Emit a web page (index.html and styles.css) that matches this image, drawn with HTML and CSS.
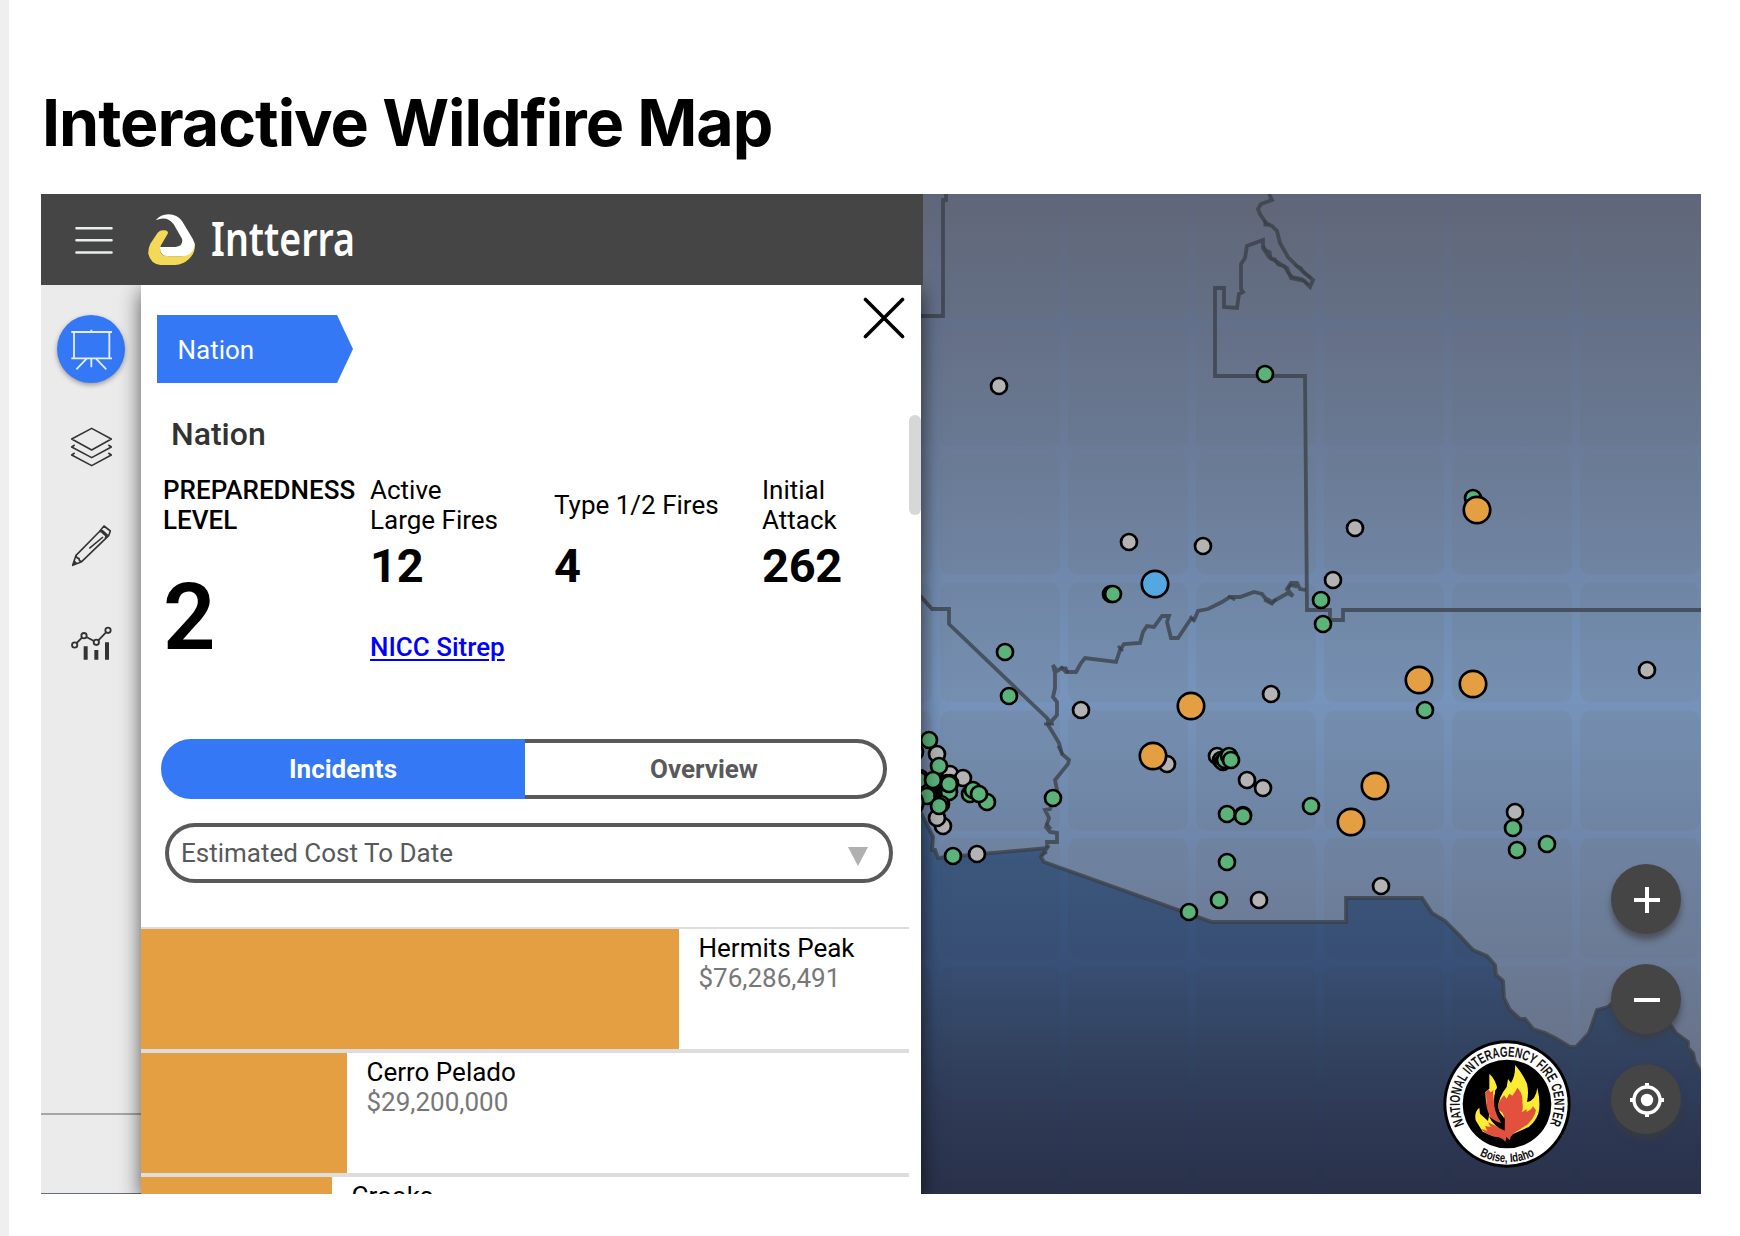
FILE: index.html
```html
<!DOCTYPE html>
<html lang="en">
<head>
<meta charset="utf-8">
<title>Interactive Wildfire Map</title>
<link rel="stylesheet" href="styles.css">
</head>
<body>
<main class="page">
<h1 class="page-title">Interactive Wildfire Map</h1>
<section class="widget">
<svg class="map" viewBox="41 194 1660 1000" aria-label="Incident map">
<defs>
<linearGradient id="land" gradientUnits="userSpaceOnUse" x1="0" y1="194" x2="0" y2="1194">
<stop offset="0" stop-color="#5f667a"/><stop offset=".13" stop-color="#63708b"/><stop offset=".26" stop-color="#6a7c9a"/><stop offset=".39" stop-color="#7089ad"/><stop offset=".5" stop-color="#7694bc"/><stop offset=".64" stop-color="#6f87ab"/><stop offset=".77" stop-color="#6b7c9a"/><stop offset=".87" stop-color="#67738f"/><stop offset="1" stop-color="#626b84"/>
</linearGradient>
<linearGradient id="sea" gradientUnits="userSpaceOnUse" x1="0" y1="194" x2="0" y2="1194">
<stop offset=".62" stop-color="#3f5f8e"/><stop offset=".67" stop-color="#3b5982"/><stop offset=".77" stop-color="#385077"/><stop offset=".84" stop-color="#334666"/><stop offset=".92" stop-color="#2d3956"/><stop offset="1" stop-color="#29314b"/>
</linearGradient>
<pattern id="tiles" patternUnits="userSpaceOnUse" x="940" y="326.5" width="128" height="128">
<rect width="120" height="120" rx="10" fill="#6e6a64" fill-opacity=".12"/>
</pattern>
<pattern id="tilesFaint" patternUnits="userSpaceOnUse" x="940" y="326.5" width="128" height="128">
<rect width="120" height="120" rx="10" fill="#3c3c40" fill-opacity=".09"/>
</pattern>
<path id="ocean" d="M921 813L933 837 932 850 935 850 938 858 1047 848 1041 857 1044 862 1212 922H1346V898H1422L1432 913 1445 921 1460 936 1473 950 1487 956 1495 965 1496 975 1503 981 1504 998 1510 1010 1520 1019 1525 1019 1533 1029 1545 1033 1555 1038 1570 1047H1576L1589 1033 1597 1010 1608 1007 1620 996 1650 1000 1672 1027 1676 1033 1688 1042 1688 1048 1693 1053 1695 1062 1701 1072 1710 1080V1210H900V813Z"/>
</defs>
<rect x="41" y="194" width="1660" height="1000" fill="url(#land)"/>
<rect x="41" y="194" width="1660" height="1000" fill="url(#tiles)"/>
<use href="#ocean" fill="url(#sea)"/>
<use href="#ocean" fill="url(#tilesFaint)"/>
<g class="borders">
<path d="M946 194V200H943V316H915"/>
<path d="M1269 194L1272 200 1261 204 1258 209 1260 214 1266 223 1272 226 1277 231 1280 243 1288 257 1298 267 1313 280 1310 287 1304 281 1291 278 1287 268 1277 262 1269 257 1263 248V240L1247 246 1245 258 1241 264V289L1243 292 1239 294 1237 308 1224 307V288H1215V376H1305L1307 610H1330V620H1343V610H1701"/>
<path class="rough" d="M1263 246L1266 250 1270 252 1271 259 1275 259 1278 265 1284 266 1288 273 1293 277 1302 279 1309 285M1295 265L1301 268 1304 273 1311 278M1265 220V225H1270"/>
<path d="M1306 590L1300 589 1297 583 1291 583 1287 589 1293 596 1288 593 1272 602 1265 598 1262 594 1254 592 1240 597 1230 597 1222 602 1208 609 1198 611 1195 618 1190 620 1178 638H1171L1167 622 1169 616H1162L1154 627 1147 626 1143 632 1140 643 1124 644 1120 650 1116 662 1085 658 1081 663 1076 672H1066L1062 668 1057 671 1053 665 1055 673V688L1053 697 1057 702V715L1050 723 1048 719 1048 725 1053 733 1059 743 1062 754 1069 760 1068 764 1055 780 1057 790 1053 800 1050 809 1045 810 1049 818 1046 827 1050 832 1057 833V842H1047V848"/>
<path class="rough" d="M1060 668L1066 668 1068 673M1118 646L1123 651M1190 616L1195 622M1228 596L1235 600M1264 600L1272 604 1276 599M1288 589L1291 585 1297 587M1044 724L1054 724M1058 746L1063 755M1040 856L1047 852M1046 823L1051 829"/>
<path d="M915 590L932 609H949V624L1048 719"/>
<use href="#ocean"/>
</g>
<g class="dot contained">
<circle cx="1265" cy="374" r="8"/><circle cx="1111" cy="594" r="8"/><circle cx="1113" cy="594" r="8"/><circle cx="1321" cy="600" r="8"/><circle cx="1323" cy="624" r="8"/><circle cx="1473" cy="498" r="8"/><circle cx="1005" cy="652" r="8"/><circle cx="1009" cy="696" r="8"/><circle cx="1425" cy="710" r="8"/><circle cx="1053" cy="798" r="8"/><circle cx="1311" cy="806" r="8"/><circle cx="1227" cy="814" r="8"/><circle cx="1243" cy="815" r="8"/><circle cx="1243" cy="816" r="8"/><circle cx="1227" cy="862" r="8"/><circle cx="1219" cy="900" r="8"/><circle cx="1189" cy="912" r="8"/><circle cx="1517" cy="850" r="8"/><circle cx="1547" cy="844" r="8"/><circle cx="953" cy="856" r="8"/>
</g>
<g class="dot reported">
<circle cx="999" cy="386" r="8"/><circle cx="1129" cy="542" r="8"/><circle cx="1203" cy="546" r="8"/><circle cx="1355" cy="528" r="8"/><circle cx="1333" cy="580" r="8"/><circle cx="1081" cy="710" r="8"/><circle cx="1271" cy="694" r="8"/><circle cx="1647" cy="670" r="8"/><circle cx="1247" cy="780" r="8"/><circle cx="1263" cy="788" r="8"/><circle cx="1167" cy="764" r="8"/><circle cx="1515" cy="812" r="8"/><circle cx="1381" cy="886" r="8"/><circle cx="1259" cy="900" r="8"/><circle cx="977" cy="854" r="8"/><circle cx="1217" cy="756" r="8"/><circle cx="943" cy="826" r="8"/><circle cx="937" cy="818" r="8"/><circle cx="937" cy="754" r="8"/><circle cx="950" cy="774" r="8"/><circle cx="963" cy="778" r="8"/>
</g>
<g class="dot contained">
<circle cx="1513" cy="828" r="8"/><circle cx="1221" cy="760" r="8"/><circle cx="1223" cy="762" r="8"/><circle cx="1225" cy="760" r="8"/><circle cx="1229" cy="756" r="8"/><circle cx="1231" cy="760" r="8"/>
<circle cx="915" cy="752" r="8"/><circle cx="929" cy="740" r="8"/><circle cx="939" cy="766" r="8"/><circle cx="920" cy="778" r="8"/><circle cx="919" cy="780" r="8"/><circle cx="950" cy="783" r="8"/><circle cx="936" cy="788" r="8"/><circle cx="939" cy="794" r="8"/><circle cx="943" cy="790" r="8"/><circle cx="937" cy="799" r="8"/><circle cx="949" cy="792" r="8"/><circle cx="947" cy="783" r="8"/><circle cx="933" cy="780" r="8"/><circle cx="949" cy="784" r="8"/><circle cx="927" cy="796" r="8"/><circle cx="941" cy="804" r="8"/><circle cx="939" cy="806" r="8"/><circle cx="987" cy="802" r="8"/><circle cx="970" cy="794" r="8"/><circle cx="973" cy="790" r="8"/><circle cx="979" cy="794" r="8"/>
</g>
<path d="M935 789L941 784 942 794 938 799 933 797Z"/>
<g class="dot large"><circle cx="1477" cy="510" r="13.2"/><circle cx="1419" cy="680" r="13.2"/><circle cx="1473" cy="684" r="13.2"/><circle cx="1191" cy="706" r="13.2"/><circle cx="1153" cy="756" r="13.2"/><circle cx="1375" cy="786" r="13.2"/><circle cx="1351" cy="822" r="13.2"/></g>
<g class="dot prescribed"><circle cx="1155" cy="584" r="13.2"/><circle cx="910" cy="803" r="13.2"/></g>
</svg>

<div class="console">
<header class="topbar">
<svg class="menu" viewBox="0 0 38 28"><path d="M1.500 2.300h35M1.500 14.300h35M1.500 26.500h35"/></svg>
<svg class="brand" viewBox="440 455 150 165">
<path fill="#f4d857" d="M488 510Q503 508 503 519L482 555Q474 575 488 585 495 588 505 588L545 588Q570 583 583 545 588 575 565 597 548 613 525 614H480Q450 610 444 580 443 565 450 550L472 517Q479 510 488 510Z"/>
<path fill="#fff" d="M466 480Q480 462 505 462 530 462 545 482L577 535Q588 555 577 572 565 588 545 588H500Q478 586 479 560H525Q550 557 545 535L520 492Q500 465 466 480Z"/>
</svg>
<svg class="wordmark" viewBox="0 0 150 73"><text class="brand-name" x="2" y="54" textLength="144" lengthAdjust="spacingAndGlyphs">Intterra</text></svg>
</header>
<div class="body">
<nav class="rail">
<div class="rail-items">
<svg class="rail-icon active" viewBox="51 75 204 204"><path d="M94 126H216M94 205H216M102 126V205M208 126V205M154 119V126M140 206L109 238M154 206V232M168 206L199 238"/></svg>
<svg class="rail-icon" viewBox="51 369 204 204"><path d="M155 415L214 447 155 480 95 447ZM104 465L95 471 155 503 214 471 205 465M104 489L95 495 155 527 214 495 205 489"/></svg>
<svg class="rail-icon" viewBox="51 663 204 204"><path d="M192 708L211 723 206 737 125 815 98 826 108 796 177 726ZM177 726L183 724 198 738 196 746M183 718L203 736M108 796Q110 806 117 805 116 813 125 815M189 741L148 775"/><path class="solid" d="M98 826L103 810 112 820Z"/></svg>
<svg class="rail-icon" viewBox="51 957 204 204"><g class="trend"><circle cx="104" cy="1065" r="8"/><circle cx="132" cy="1037" r="8"/><circle cx="169" cy="1057" r="8"/><circle cx="204" cy="1021" r="8"/><path d="M110 1059L126 1043M139 1041L162 1053M175 1051L198 1027"/></g><path class="solid" d="M131 1069h12v40h-12zM163 1080h12v29h-12zM195 1057h12v52h-12z"/></svg>
</div>
<div class="rail-foot"></div>
</nav>
<div class="panel">
<div class="panel-head">
<div class="crumb">Nation</div>
<svg class="close" viewBox="0 0 42 42"><path d="M2.500 2.500L39.500 39.500M39.500 2.500L2.500 39.500"/></svg>
</div>
<div class="scroller">
<h2 class="region">Nation</h2>
<div class="stats">
<div class="stat"><div class="label strong">PREPAREDNESS LEVEL</div><div class="level">2</div></div>
<div class="stat"><div class="label">Active<br>Large Fires</div><div class="count">12</div><a class="sitrep" href="#">NICC Sitrep</a></div>
<div class="stat"><div class="label">Type 1/2 Fires</div><div class="count">4</div></div>
<div class="stat"><div class="label">Initial<br>Attack</div><div class="count">262</div></div>
</div>
<div class="tabs"><div class="tab selected">Incidents</div><div class="tab">Overview</div></div>
<div class="select"><span>Estimated Cost To Date</span><i class="arrow"></i></div>
<div class="rows">
<div class="row"><div class="bar" style="width:538px"></div><div class="info">Hermits Peak<span class="cost">$76,286,491</span></div></div>
<div class="row"><div class="bar" style="width:206px"></div><div class="info">Cerro Pelado<span class="cost">$29,200,000</span></div></div>
<div class="row"><div class="bar" style="width:191px"></div><div class="info">Crooks</div></div>
</div>
<div class="thumb"></div>
</div>
</div>
</div>
</div>

<div class="overlay">
<svg class="badge" viewBox="39 29 384 384">
<defs><path id="arcTop" d="M102.800 282A142 142 0 1 1 359.200 282"/><path id="arcLow" d="M149 375A175 175 0 0 0 318 373"/></defs>
<circle cx="231" cy="221" r="191" fill="#000"/><circle cx="231" cy="221" r="182" fill="#fff"/><circle cx="231" cy="221" r="133" fill="#000"/>
<text class="badge-text"><textPath href="#arcTop" textLength="572" lengthAdjust="spacingAndGlyphs">NATIONAL INTERAGENCY FIRE CENTER</textPath></text>
<text class="badge-text low"><textPath href="#arcLow" textLength="172" lengthAdjust="spacingAndGlyphs">Boise, Idaho</textPath></text>
<path fill="#fdec34" d="M178 130Q200 150 202 180L196 178 193 205Q196 235 212 265L222 285V262L203 238Q205 200 230 170L234 146 243 158Q257 135 255 104 275 125 291 160 297 185 291 215 318 210 322 172 333 220 325 250 315 275 296 290L228 320 190 318 158 304 137 270Q132 245 148 232L150 250 174 272 178 250 168 215 166 185 178 175Z"/>
<path fill="#e2503e" d="M168 185L175 177 182 186 190 180Q187 210 200 240 210 262 222 283 227 240 201 240 203 215 222 195L230 205 238 190 247 196Q258 182 262 172 280 190 277 215 280 232 276 246L290 236 290 245 303 237 309 228 318 240Q313 262 295 280 268 300 252 308L242 320 239 330 229 320 226 334Q215 320 190 318 162 308 152 295L172 301 165 287 182 290 174 276 204 290Q176 262 170 230Z"/>
<path d="M206 160Q188 195 193 228 198 256 214 278 192 272 176 256 190 288 224 301L225 262 219 268Q203 240 201 212 202 185 214 156Z"/>
</svg>
<div class="controls">
<svg class="ctl" viewBox="0 0 70 70"><path d="M23 36H49M36 23V49"/></svg>
<svg class="ctl" viewBox="0 0 70 70"><path d="M23 36H49"/></svg>
<svg class="ctl" viewBox="0 0 70 70"><circle class="ring" cx="36" cy="36" r="13"/><circle class="core" cx="36" cy="36" r="6.200"/><path d="M36 19V24M36 48V53M19 36H24M48 36H53"/></svg>
</div>
</div>
</section>
</main>
</body>
</html>
```
FILE: styles.css
```css
* { box-sizing: border-box; }
body { margin: 0; background: #fff; font-family: Roboto, "Liberation Sans", sans-serif; }
.page { height: 1236px; border-left: 9px solid #efefef; padding: 84px 39px 0 33px; overflow: hidden; }
.page-title { margin: 0 0 32px; font: 700 64.5px/78px Inter, sans-serif; letter-spacing: -1.05px; color: #000; white-space: nowrap; }
.widget { display: grid; width: 1660px; height: 1000px; margin-left: -1px; overflow: hidden; }
.widget > * { grid-area: 1 / 1; }
.map { display: block; width: 1660px; height: 1000px; }
.borders { fill: none; stroke: #3a3f47; stroke-opacity: .76; stroke-width: 3.8; }
.borders .rough { stroke-width: 3; }
.dot { stroke: #000; stroke-width: 2.7; }
.contained { fill: #5bb37a; }
.reported { fill: #b3b3b3; }
.large { fill: #e39f41; }
.prescribed { fill: #54a8df; }

.console { width: 882px; height: 1000px; display: flex; flex-direction: column; z-index: 1; }
.topbar { height: 91px; flex: none; background: #454545; display: flex; align-items: flex-start; padding: 18px 0 0 34px; z-index: 2; }
.menu { width: 38px; height: 28px; margin: 13.5px 34px 0 0; fill: none; stroke: #ebeeee; stroke-width: 2.6; stroke-linecap: round; }
.brand { width: 50px; height: 55px; }
.wordmark { width: 150px; height: 73px; margin: -10px 0 0 12px; overflow: visible; }
.brand-name { font: 600 46px "Noto Sans", sans-serif; fill: #fff; }
.body { display: flex; width: 880px; height: 909px; }
.rail { width: 100px; height: 908px; flex: none; background: #ebebeb; display: flex; flex-direction: column; justify-content: space-between; }
.rail-items { display: flex; flex-direction: column; gap: 30px; padding: 30px 0 0 16px; }
.rail-icon { width: 68px; height: 68px; fill: none; stroke: #333; stroke-width: 4.8; stroke-linejoin: round; }
.rail-icon.active { background: #3478f6; border-radius: 50%; stroke: #e4edff; stroke-width: 5.5; box-shadow: 0 2px 5px rgba(0,0,0,.35); }
.rail-icon .solid { fill: #333; stroke: none; }
.rail-icon .trend { stroke-width: 5.5; }
.rail-foot { height: 80px; border-top: 2px solid #a6a6a6; }
.panel { width: 780px; background: #fff; box-shadow: 0 6px 20px rgba(0,0,0,.64); display: flex; flex-direction: column; z-index: 1; }
.panel-head { height: 120px; flex: none; display: flex; justify-content: space-between; padding: 12px 16px 0 16px; }
.crumb { width: 196px; height: 68px; margin-top: 18px; padding-left: 20.5px; background: #3478f6; color: #fff; font-size: 26px; line-height: 70px; clip-path: polygon(0 0, 180px 0, 100% 50%, 180px 100%, 0 100%); }
.close { width: 42px; height: 42px; stroke: #000; stroke-width: 3.6; stroke-linecap: round; }
.scroller { position: relative; flex: 1; overflow: hidden; font-size: 26px; line-height: 30px; }
.region { margin: 0; padding: 10px 0 0 30px; font-size: 32px; line-height: 38px; font-weight: 500; color: #333; }
.stats { display: grid; grid-template-columns: 207px 184px 208px auto; margin: 22px 0 0 22px; height: 264px; color: #000; }
.stat { display: flex; flex-direction: column; }
.label { height: 60px; display: flex; flex-direction: column; justify-content: center; white-space: nowrap; }
.label.strong { font-weight: 500; width: 192px; white-space: normal; display: block; }
.count { margin-top: 3px; font-size: 47px; line-height: 56px; font-weight: 700; letter-spacing: -.3px; }
.level { margin-top: 33px; font-size: 92px; line-height: 100px; font-weight: 600; }
.sitrep { margin-top: 38px; color: #00f; font-weight: 500; text-underline-offset: 3px; }
.tabs { display: flex; width: 726px; height: 60px; margin-left: 20px; }
.tab { flex: 1; border: 4px solid #58595b; border-left: 0; border-radius: 0 30px 30px 0; color: #58595b; font-weight: 700; text-align: center; line-height: 52px; }
.tab.selected { flex: 0 0 364px; border: 0; border-radius: 30px 0 0 30px; background: #3478f6; color: #fff; line-height: 60px; }
.select { display: flex; justify-content: space-between; align-items: center; width: 728px; height: 60px; margin: 24px 0 0 24px; padding: 0 21px 0 12px; border: 4px solid #58595b; border-radius: 30px; color: #58595b; }
.arrow { border: 10px solid transparent; border-top: 19px solid #b0b0b0; border-bottom: 0; margin-top: 7px; }
.rows { width: 768px; margin-top: 44px; border-top: 2px solid #ddd; }
.row { display: flex; height: 124px; border-bottom: 4px solid #ddd; }
.bar { background: #e39f41; }
.info { padding: 4px 0 0 19.5px; color: #000; }
.cost { display: block; color: #777; }
.thumb { position: absolute; right: 0; top: 10px; width: 12px; height: 100px; border-radius: 6px; background: #d7d7d7; }

.overlay { justify-self: end; align-self: end; display: flex; align-items: flex-end; gap: 40px; padding: 0 20px 26px 0; z-index: 1; }
.badge { width: 128px; height: 128px; }
.badge-text { font: 700 43px "Liberation Sans", sans-serif; fill: #111; }
.badge-text.low { font-size: 38px; }
.controls { display: flex; flex-direction: column; gap: 30px; margin-bottom: 34px; }
.ctl { width: 70px; height: 70px; border-radius: 50%; background: #454545; fill: none; stroke: #fff; stroke-width: 4; box-shadow: 0 6px 6px rgba(60,60,60,.65); }
.ctl .ring { stroke-width: 3.4; }
.ctl .core { fill: #fff; stroke: none; }
```
